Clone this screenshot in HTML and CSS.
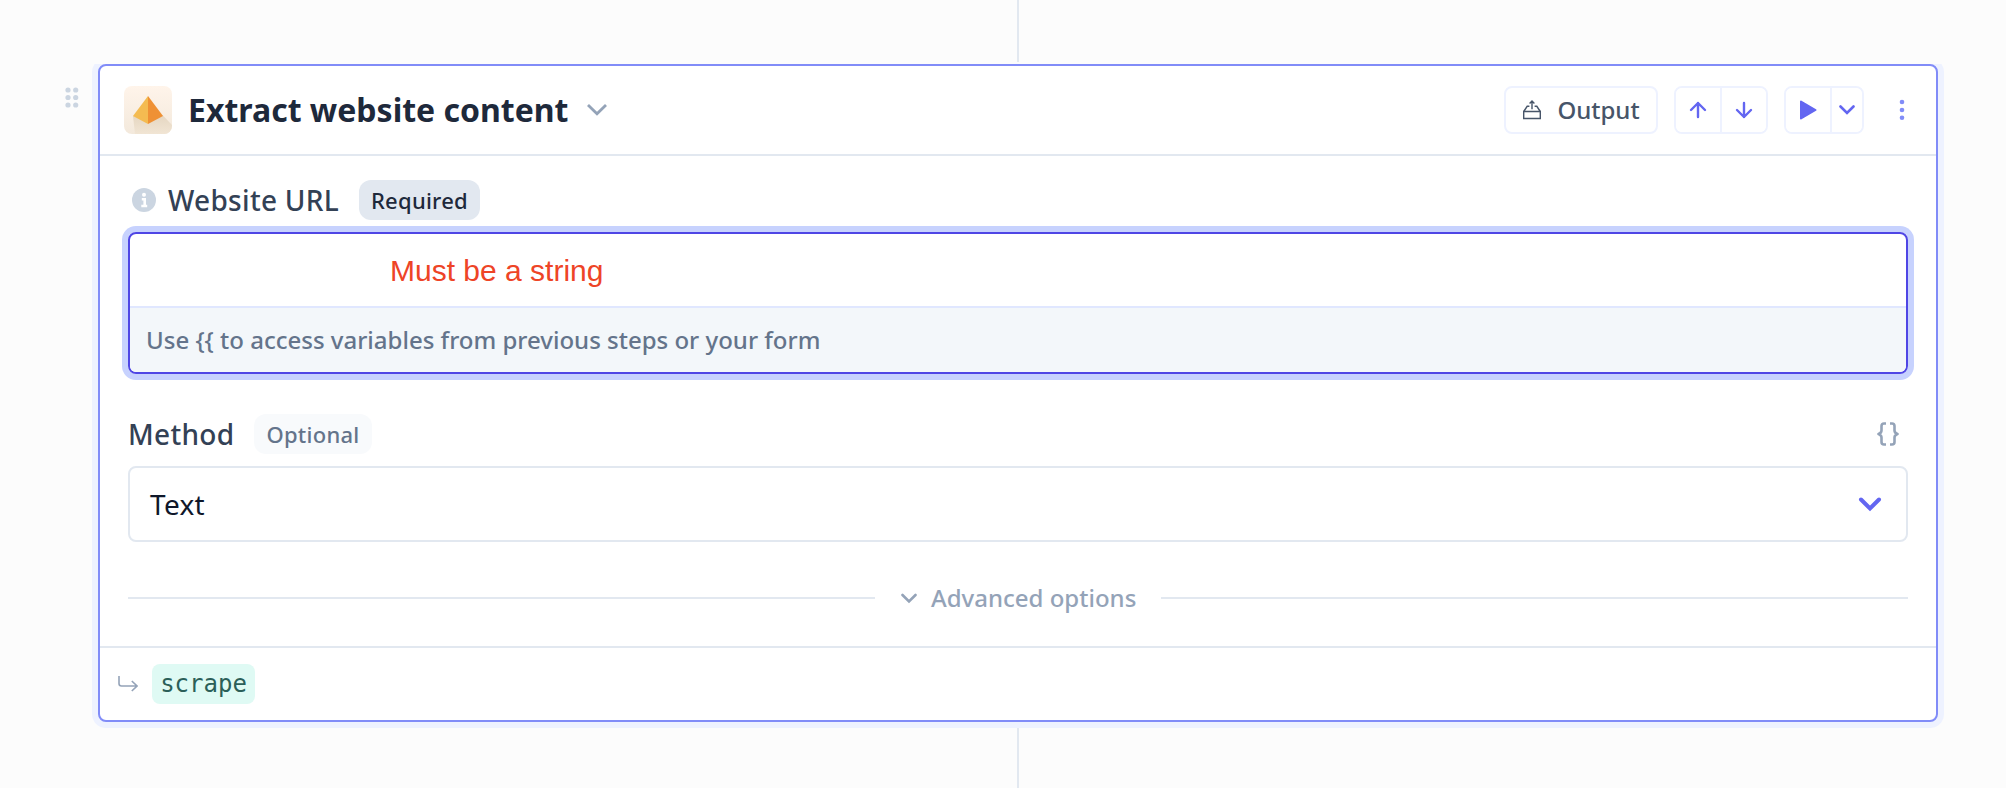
FILE: index.html
```html
<!DOCTYPE html>
<html lang="en">
<head>
<meta charset="utf-8">
<title>Extract website content</title>
<link rel="stylesheet" href="styles.css">
</head>
<body>
<div class="connector connector-top"></div>
<main class="step">
  <svg class="drag" width="14" height="22" viewBox="0 0 14 22" fill="#cbd5e1"><circle cx="3" cy="3" r="2.6"/><circle cx="10.7" cy="3" r="2.6"/><circle cx="3" cy="10.5" r="2.6"/><circle cx="10.7" cy="10.5" r="2.6"/><circle cx="3" cy="18" r="2.6"/><circle cx="10.7" cy="18" r="2.6"/></svg>
  <section class="card">
    <header class="header">
      <svg class="logo" width="48" height="48" viewBox="0 0 48 48">
        <defs>
          <linearGradient id="tile" x1="0" y1="0" x2="0" y2="1"><stop offset="0" stop-color="#fff4ea"/><stop offset="1" stop-color="#f3e9dc"/></linearGradient>
          <linearGradient id="shade" x1="0" y1="0" x2="0" y2="1"><stop offset="0" stop-color="#e5d6c1"/><stop offset="1" stop-color="#f1e5d4"/></linearGradient>
          <clipPath id="round"><rect width="48" height="48" rx="8"/></clipPath>
        </defs>
        <g clip-path="url(#round)">
          <rect width="48" height="48" fill="url(#tile)"/>
          <path d="M9 30L38.500 29L48 39V48H11Z" fill="url(#shade)"/>
          <path d="M24 10L9 30L24 38Z" fill="#f4bb51"/>
          <path d="M24 10L39 30L24 38Z" fill="#ef9135"/>
        </g>
      </svg>
      <h1 class="title">Extract website content</h1>
      <svg class="title-chevron" width="20" height="12" viewBox="0 0 20 12" fill="none" stroke="#94a3b8" stroke-width="2.800"><path d="M1 1L10 9.800L19 1"/></svg>
      <div class="actions">
        <button class="output">
          <svg width="20" height="20" viewBox="0 0 20 20" fill="none" stroke="#475569" stroke-width="1.400"><path d="M1.700 11.500H18.300V18.500H1.700ZM1.700 11.500L5.200 6.300H7.400M18.300 11.500L14.800 6.300H12.600M10 9.200V1.500M7.600 3.400L10 1L12.400 3.400"/></svg>
          <span>Output</span>
        </button>
        <div class="group moves">
          <button><svg width="18" height="18" viewBox="0 0 18 18" fill="none" stroke="#6366f1" stroke-width="2.400" stroke-linecap="round" stroke-linejoin="round"><path d="M9 16V2M2 9L9 2L16 9"/></svg></button>
          <button><svg width="18" height="18" viewBox="0 0 18 18" fill="none" stroke="#6366f1" stroke-width="2.400" stroke-linecap="round" stroke-linejoin="round"><path d="M9 2V16M2 9L9 16L16 9"/></svg></button>
        </div>
        <div class="group run">
          <button><svg width="18" height="20" viewBox="0 0 18 20" fill="#6366f1" stroke="#6366f1" stroke-width="2" stroke-linejoin="round"><path d="M2 1.500L16.500 10L2 18.500Z"/></svg></button>
          <button><svg width="16" height="10" viewBox="0 0 16 10" fill="none" stroke="#6366f1" stroke-width="2.600" stroke-linecap="round"><path d="M1.500 1.500L8 8L14.500 1.500"/></svg></button>
        </div>
        <svg class="more" width="6" height="22" viewBox="0 0 6 22" fill="#818cf8"><circle cx="3" cy="3" r="2.300"/><circle cx="3" cy="11" r="2.300"/><circle cx="3" cy="18.800" r="2.300"/></svg>
      </div>
    </header>
    <div class="body">
      <div class="label-row url-label">
        <svg class="info" width="24" height="24" viewBox="0 0 24 24"><circle cx="12" cy="12" r="12" fill="#cbd5e1"/><circle cx="12" cy="6.700" r="2" fill="#fff"/><path d="M9.800 11.300H12.700V18M9.300 18H15.200" fill="none" stroke="#fff" stroke-width="2.600"/></svg>
        <span class="label">Website URL</span>
        <span class="badge required">Required</span>
      </div>
      <div class="field">
        <div class="field-input">Must be a string</div>
        <div class="field-hint">Use {{ to access variables from previous steps or your form</div>
      </div>
      <div class="label-row method-label">
        <span class="label">Method</span>
        <span class="badge optional">Optional</span>
        <svg class="braces" width="22" height="24" viewBox="0 0 22 24" fill="none" stroke="#94a3b8" stroke-width="2.600" stroke-linejoin="round"><path d="M9 1.500H7Q4.500 1.500 4.500 4V8.500Q4.500 11 1.500 12Q4.500 13 4.500 15.500V20Q4.500 22.500 7 22.500H9M13 1.500H15Q17.500 1.500 17.500 4V8.500Q17.500 11 20.500 12Q17.500 13 17.500 15.500V20Q17.500 22.500 15 22.500H13"/></svg>
      </div>
      <div class="select">
        <span>Text</span>
        <svg width="24" height="16" viewBox="0 0 24 16" fill="none" stroke="#6366f1" stroke-width="4" stroke-linecap="round"><path d="M3 3.500L12 12.500L21 3.500"/></svg>
      </div>
      <div class="advanced">
        <span class="rule"></span>
        <svg width="16" height="11" viewBox="0 0 16 11" fill="none" stroke="#94a3b8" stroke-width="2.600" stroke-linecap="round"><path d="M1.500 2L8 8.500L14.500 2"/></svg>
        <span class="advanced-text">Advanced options</span>
        <span class="rule"></span>
      </div>
    </div>
    <footer class="footer">
      <svg width="20" height="16" viewBox="0 0 20 16" fill="none" stroke="#94a3b8" stroke-width="1.600"><path d="M1 0V7.500Q1 10 3.500 10H19M13.800 5L19 10L13.800 15"/></svg>
      <code class="result">scrape</code>
    </footer>
  </section>
</main>
<div class="connector connector-bottom"></div>
</body>
</html>
```
FILE: styles.css
```css
* { box-sizing: border-box; }
body {
  margin: 0;
  height: 788px;
  display: flex;
  flex-direction: column;
  overflow: hidden;
  background: #fcfcfc;
  font-family: "Noto Sans", sans-serif;
}
svg { display: block; flex: none; }
.connector { width: 2px; margin-left: 1017px; background: #e2e8f0; flex: none; }
.connector-top { height: 62px; margin-bottom: 2px; }
.connector-bottom { height: 60px; margin-top: 6px; }
.step { display: flex; height: 658px; flex: none; }
.drag { margin: 23px 19px 0 65px; }
.card {
  width: 1840px;
  height: 658px;
  flex: none;
  border: 2px solid #818cf8;
  border-radius: 8px;
  background: #fff;
  box-shadow: 0 0 0 6px #eef2ff;
  clip-path: inset(0 -6px -6px -6px);
}
.header {
  height: 90px;
  display: flex;
  align-items: center;
  padding: 0 31px 0 24px;
  border-bottom: 2px solid #e2e8f0;
}
.title {
  margin: 0 0 0 16px;
  width: 382px;
  font-size: 32px;
  line-height: 44px;
  font-weight: 700;
  color: #1e293b;
  white-space: nowrap;
}
.title-chevron { margin-left: 17px; }
.actions { margin-left: auto; display: flex; align-items: center; }
button {
  display: flex;
  align-items: center;
  justify-content: center;
  padding: 0;
  background: #fff;
  border: 0;
  font: inherit;
}
.output {
  width: 154px;
  height: 48px;
  gap: 15px;
  border: 2px solid #eef2ff;
  border-radius: 8px;
  color: #475569;
  font-size: 24px;
  font-weight: 500;
}
.output span { margin-top: -2px; }
.group {
  display: flex;
  height: 48px;
  margin-left: 16px;
  border: 2px solid #eef2ff;
  border-radius: 8px;
  overflow: hidden;
}
.group button + button { border-left: 2px solid #eef2ff; }
.moves { width: 94px; }
.moves button:first-child { width: 44px; }
.moves button:last-child { width: 46px; }
.run { width: 80px; }
.run button:first-child { width: 44px; }
.run button:last-child { width: 32px; }
.more { margin-left: 35px; }
.body { padding: 24px 28px 0; height: 490px; }
.label-row { display: flex; align-items: center; height: 40px; }
.label { font-size: 28px; line-height: 40px; font-weight: 500; letter-spacing: 0.3px; color: #334155; white-space: nowrap; }
.info { margin: 0 12px 0 4px; }
.badge {
  height: 40px;
  border-radius: 12px;
  font-size: 22px;
  line-height: 40px;
  font-weight: 500;
  letter-spacing: 0.25px;
  text-align: center;
}
.url-label .label { width: 171px; }
.required { width: 121px; margin-left: 20px; background: #e2e8f0; color: #1e293b; }
.field {
  height: 142px;
  margin-top: 12px;
  border: 2px solid #4f46e5;
  border-radius: 8px;
  box-shadow: 0 0 0 6px #c7d2fe;
  overflow: hidden;
}
.field-input {
  height: 72px;
  padding-left: 260px;
  font-family: "Liberation Sans", sans-serif;
  font-size: 30px;
  line-height: 74px;
  color: #ee4426;
}
.field-hint {
  height: 66px;
  padding-left: 16px;
  border-top: 2px solid #e0e7ff;
  background: #f3f7fa;
  color: #64748b;
  font-size: 24px;
  font-weight: 500;
  line-height: 63px;
}
.method-label { margin-top: 40px; }
.method-label .label { width: 106px; }
.optional { width: 118px; margin-left: 20px; background: #f8fafc; color: #64748b; }
.braces { margin: 0 9px 0 auto; }
.select {
  display: flex;
  align-items: center;
  justify-content: space-between;
  height: 76px;
  margin-top: 12px;
  padding: 0 24px 0 20px;
  border: 2px solid #e2e8f0;
  border-radius: 8px;
  color: #0f172a;
  font-size: 28px;
  letter-spacing: 0.3px;
}
.advanced { display: flex; align-items: center; height: 40px; margin-top: 36px; }
.advanced svg { margin: 0 14px 0 26px; }
.rule { flex: 1; height: 2px; background: #e2e8f0; }
.advanced-text { width: 206px; margin: -2px 24px 0 0; color: #94a3b8; font-size: 24px; font-weight: 500; white-space: nowrap; }
.footer {
  display: flex;
  align-items: center;
  height: 74px;
  padding: 0 0 0 18px;
  border-top: 2px solid #e2e8f0;
}
.result {
  width: 103px;
  height: 40px;
  margin-left: 14px;
  border-radius: 8px;
  background: #dffaf4;
  color: #2b5f59;
  font-family: "DejaVu Sans Mono", monospace;
  font-size: 24px;
  line-height: 40px;
  text-align: center;
}
```
